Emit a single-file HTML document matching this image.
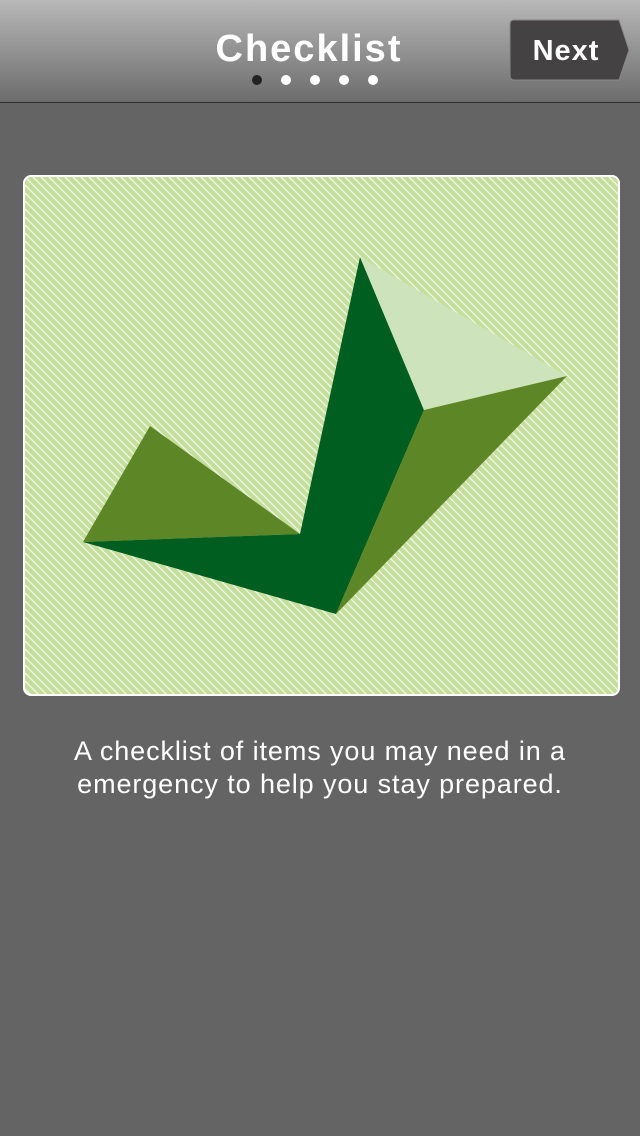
<!DOCTYPE html>
<html><head><meta charset="utf-8"><style>
body{margin:0;width:640px;height:1136px;background:#646464;overflow:hidden;font-family:"Liberation Sans",sans-serif;position:relative}
.hdr{position:absolute;left:0;top:0;width:640px;height:102px;background:linear-gradient(#b8b8b8,#6c6c6c);border-bottom:1px solid #2e2e2e}
.title{position:absolute;left:0;width:618px;text-align:center;top:28px;font-size:38px;font-weight:bold;color:#fff;letter-spacing:2px}
.dot{position:absolute;top:75px;width:10px;height:10px;border-radius:50%;background:#fff}
.txt{position:absolute;left:0;width:640px;top:735px;text-align:center;color:#fff;font-size:27px;line-height:33px;letter-spacing:0.9px}
</style></head><body>
<div class="hdr">
<div class="title">Checklist</div>
<div class="dot" style="left:252px;background:#222"></div>
<div class="dot" style="left:281px"></div>
<div class="dot" style="left:310px"></div>
<div class="dot" style="left:339px"></div>
<div class="dot" style="left:368px"></div>
<svg style="position:absolute;left:508px;top:19px" width="122" height="63"><path d="M6 1H111L121 31L111 61H6Q2 61 2 57V5Q2 1 6 1Z" fill="#444242" stroke="#888" stroke-width="1"/><text x="58" y="41" text-anchor="middle" font-family="Liberation Sans" font-weight="bold" font-size="29" fill="#fff" letter-spacing="1">Next</text></svg>
</div>
<svg style="position:absolute;left:0;top:0" width="640" height="1136">
<defs><pattern id="p" width="8" height="8" patternUnits="userSpaceOnUse">
<rect width="8" height="8" fill="#c4df9b"/>
<path d="M-2 -2L10 10M-2 6L2 10M6 -2L10 2" stroke="#f4f9ec" stroke-width="1.3"/>
</pattern></defs>
<rect x="24" y="176" width="595" height="519" rx="7" fill="url(#p)" stroke="#fff" stroke-width="2"/>
<polygon points="83,542 150,426 300,534" fill="#5d8626"/>
<polygon points="83,542 300,534 360,257 424,410 336,614" fill="#005e20"/>
<polygon points="360,257 567,376 424,410" fill="#cde3bb"/>
<polygon points="424,410 567,376 336,614" fill="#5d8626"/>
</svg>
<div class="txt">A checklist of items you may need in a<br>emergency to help you stay prepared.</div>
</body></html>
